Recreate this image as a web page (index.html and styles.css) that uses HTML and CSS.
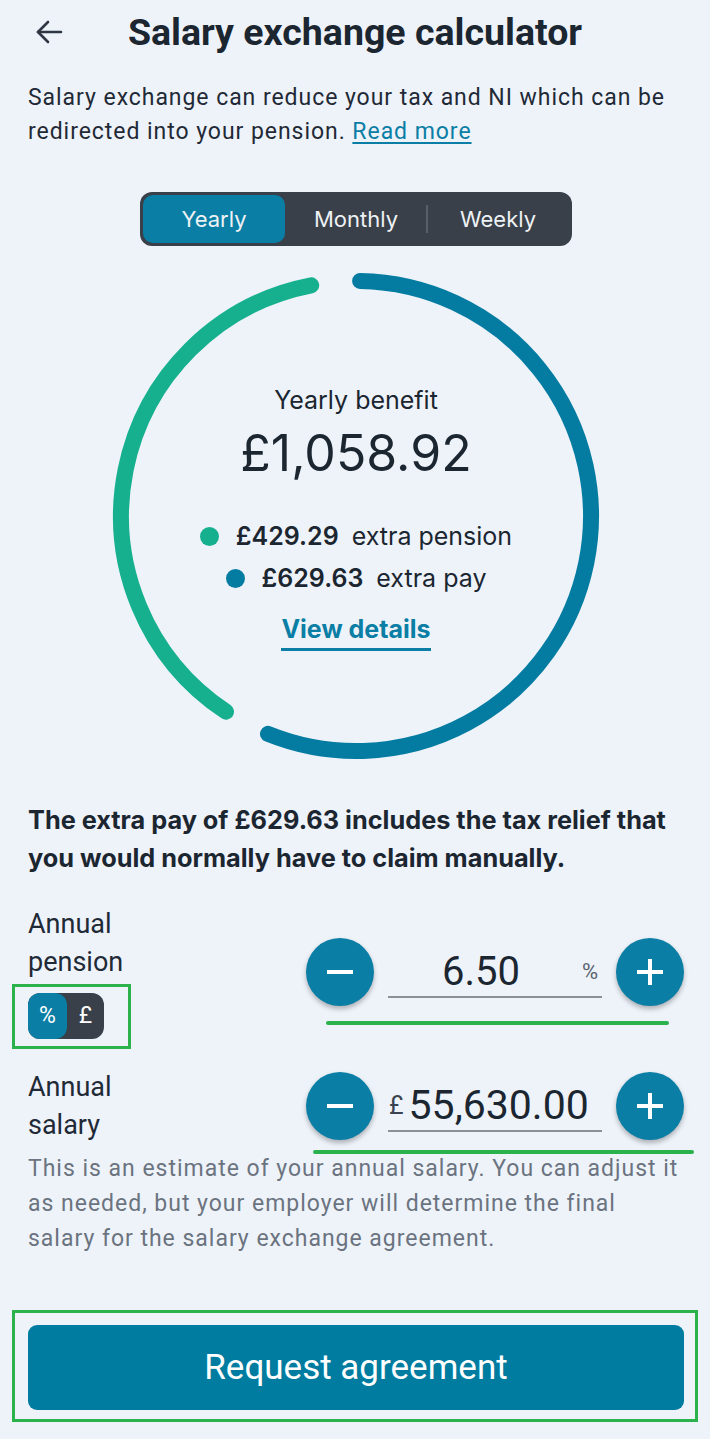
FILE: index.html
```html
<!DOCTYPE html>
<html lang="en">
<head>
  <meta charset="UTF-8" />
  <meta name="viewport" content="width=device-width, initial-scale=1.0"/>
  <title>Salary exchange calculator</title>
  <link rel="stylesheet" href="styles.css">
</head>
<body>

  <header class="topbar">
    <button class="back" aria-label="Back">
      <svg width="30" height="26" viewBox="0 0 30 26" fill="none" stroke="#2f3742" stroke-width="2.6" stroke-linecap="round" stroke-linejoin="round">
        <path d="M27 13H4"/>
        <path d="M14 3L4 13l10 10"/>
      </svg>
    </button>
    <h1>Salary exchange calculator</h1>
  </header>

  <main class="page">
    <p class="intro">Salary exchange can reduce your tax and NI which can be redirected into your pension. <a href="#">Read more</a></p>

    <!-- Period switch -->
    <div class="period-tabs">
      <button class="tab active">Yearly</button>
      <button class="tab">Monthly</button>
      <span class="tab-divider"></span>
      <button class="tab">Weekly</button>
    </div>

    <!-- Benefit ring -->
    <div class="ring">
      <svg class="ring-chart" width="500" height="500" viewBox="0 0 500 500" fill="none" stroke-width="16" stroke-linecap="round">
        <path d="M254.1 15.04 A235 235 0 1 1 162.0 467.9" stroke="#047ca2"/>
        <path d="M120.0 445.7 A235 235 0 0 1 205.2 19.3" stroke="#16b08f"/>
      </svg>
      <div class="ring-center">
        <div class="benefit-label">Yearly benefit</div>
        <div class="benefit-amount">£1,058.92</div>
        <div class="legend">
          <div class="legend-row"><span class="dot green"></span><b>£429.29</b>extra pension</div>
          <div class="legend-row"><span class="dot blue"></span><b>£629.63</b>extra pay</div>
        </div>
        <a class="view-details" href="#">View details</a>
      </div>
    </div>

    <p class="note">The extra pay of £629.63 includes the tax relief that you would normally have to claim manually.</p>

    <!-- Pension -->
    <div class="field-row">
      <div class="field-label">
        <div>Annual</div>
        <div>pension</div>
        <div class="unit-toggle">
          <span class="unit active">%</span>
          <span class="unit">£</span>
          <span class="mark mark-toggle"></span>
        </div>
      </div>
      <div class="stepper">
        <button class="step" aria-label="Decrease">
          <svg width="30" height="30" viewBox="0 0 30 30" stroke="#fff" stroke-width="4"><path d="M2 15h26"/></svg>
        </button>
        <div class="amount-input">
          <span class="value">6.50</span>
          <span class="suffix">%</span>
        </div>
        <button class="step" aria-label="Increase">
          <svg width="30" height="30" viewBox="0 0 30 30" stroke="#fff" stroke-width="4"><path d="M2 15h26M15 2v26"/></svg>
        </button>
        <span class="mark mark-line pension-line"></span>
      </div>
    </div>

    <!-- Salary -->
    <div class="field-row salary-row">
      <div class="field-label">
        <div>Annual</div>
        <div>salary</div>
      </div>
      <div class="stepper">
        <button class="step" aria-label="Decrease">
          <svg width="30" height="30" viewBox="0 0 30 30" stroke="#fff" stroke-width="4"><path d="M2 15h26"/></svg>
        </button>
        <div class="amount-input salary">
          <span class="prefix">£</span>
          <span class="value">55,630.00</span>
        </div>
        <button class="step" aria-label="Increase">
          <svg width="30" height="30" viewBox="0 0 30 30" stroke="#fff" stroke-width="4"><path d="M2 15h26M15 2v26"/></svg>
        </button>
        <span class="mark mark-line salary-line"></span>
      </div>
    </div>

    <p class="helper">This is an estimate of your annual salary. You can adjust it as needed, but your employer will determine the final salary for the salary exchange agreement.</p>

    <div class="cta-wrap">
      <button class="cta">Request agreement</button>
      <span class="mark mark-cta"></span>
    </div>
  </main>

</body>
</html>
```

FILE: styles.css
```css
body {
  margin: 0;
  background: #eef3fa;
  font-family: Roboto, "Liberation Sans", sans-serif;
  color: #1b2631;
}

button {
  font-family: inherit;
  border: none;
  background: none;
  padding: 0;
  cursor: pointer;
}

.topbar {
  display: grid;
  grid-template-columns: 90px 1fr 90px;
  align-items: center;
  padding-top: 12px;
  height: 40px;
}

.back {
  display: flex;
  padding-left: 34px;
}

.topbar h1 {
  margin: 0;
  font-size: 37.5px;
  line-height: 40px;
  font-weight: 700;
  text-align: center;
  white-space: nowrap;
  color: #1b2631;
}

.page {
  padding: 0 26px 28px 28px;
}

.intro {
  margin: 29px 0 0;
  font-size: 23px;
  line-height: 34px;
  letter-spacing: 0.95px;
  color: #1f2a36;
}

.intro a {
  color: #0a7ea4;
  text-underline-offset: 3px;
}

/* Period switch */
.period-tabs {
  display: flex;
  align-items: center;
  width: 432px;
  height: 54px;
  box-sizing: border-box;
  margin: 43px auto 0;
  padding: 3px;
  background: #394049;
  border-radius: 12px;
}

.tab {
  flex: 1;
  height: 48px;
  border-radius: 10px;
  font-family: Inter, "Noto Sans", sans-serif;
  font-size: 22px;
  color: #eef2f5;
}

.tab.active {
  background: #0a7ea4;
}

.tab-divider {
  width: 2px;
  height: 28px;
  margin: 0 -1px;
  background: #56606b;
}

/* Ring */
.ring {
  display: grid;
  width: 500px;
  height: 500px;
  margin: 20px auto 0;
}

.ring > * {
  grid-area: 1 / 1;
}

.ring-center {
  display: flex;
  flex-direction: column;
  align-items: center;
  padding-top: 119px;
  font-family: Inter, "Noto Sans", sans-serif;
  color: #1b2631;
}

.benefit-label {
  font-size: 25px;
  line-height: 30px;
}

.benefit-amount {
  margin-top: 8px;
  font-size: 50px;
  line-height: 60px;
}

.legend {
  display: flex;
  flex-direction: column;
  align-items: center;
  gap: 8px;
  margin-top: 36px;
}

.legend-row {
  display: flex;
  align-items: center;
  font-size: 25px;
  line-height: 34px;
}

.legend-row b {
  font-weight: 600;
  margin-right: 13px;
}

.dot {
  width: 19px;
  height: 19px;
  border-radius: 50%;
  margin-right: 17px;
}

.dot.green { background: #16b08f; }
.dot.blue { background: #047ca2; }

.view-details {
  margin-top: 19px;
  padding-bottom: 4px;
  font-size: 25px;
  line-height: 30px;
  font-weight: 700;
  color: #0a7ea4;
  text-decoration: none;
  border-bottom: 3px solid #0a7ea4;
}

.note {
  margin: 35px 0 0;
  font-family: Inter, "Noto Sans", sans-serif;
  font-size: 25.3px;
  line-height: 38px;
  font-weight: 700;
}

/* Fields */
.field-row {
  display: flex;
  align-items: center;
  margin-top: 28px;
}

.salary-row {
  margin-top: 29px;
}

.field-label {
  flex: 1;
  font-size: 27px;
  line-height: 38px;
  color: #1f2a36;
}

.unit-toggle {
  position: relative;
  display: inline-flex;
  margin-top: 12px;
  height: 46px;
  border-radius: 12px;
  background: #394049;
  vertical-align: top;
}

.unit {
  display: flex;
  align-items: center;
  justify-content: center;
  width: 37px;
  font-size: 23px;
  color: #fff;
}

.unit.active {
  width: 39px;
  background: #0a7ea4;
  border-radius: 12px;
}

.stepper {
  position: relative;
  display: flex;
  align-items: center;
  gap: 14px;
}

.step {
  display: flex;
  align-items: center;
  justify-content: center;
  width: 68px;
  height: 68px;
  border-radius: 50%;
  background: #0a7ea4;
  box-shadow: 0 3px 5px rgba(0, 0, 0, 0.28);
}

.amount-input {
  display: flex;
  align-items: center;
  width: 214px;
  height: 52px;
  box-sizing: border-box;
  border-bottom: 2px solid #8b9096;
  color: #1b2631;
}

.amount-input .value {
  flex: 1;
  text-align: center;
  font-size: 40px;
  padding-right: 8px;
}

.suffix {
  padding-right: 4px;
  font-size: 22px;
  color: #5b6470;
}

.amount-input.salary .value {
  text-align: left;
  padding: 0 0 0 5px;
  font-size: 41px;
}

.prefix {
  padding-left: 1px;
  font-size: 25px;
  color: #3a4450;
}

.helper {
  margin: 7px 0 0;
  font-size: 23px;
  line-height: 35px;
  letter-spacing: 0.98px;
  color: #6b7380;
}

.cta-wrap {
  position: relative;
  margin-top: 69px;
}

.cta {
  display: block;
  width: 100%;
  height: 85px;
  border-radius: 9px;
  background: #007ca0;
  color: #fff;
  font-size: 35px;
}

/* green review marks */
.mark {
  position: absolute;
  box-sizing: border-box;
  pointer-events: none;
}

.mark-toggle {
  left: -16px;
  top: -9px;
  width: 119px;
  height: 65px;
  border: 3px solid #2bb24c;
}

.mark-line {
  height: 4px;
  background: #2bb24c;
  border-radius: 2px;
}

.pension-line {
  left: 20px;
  top: 83px;
  width: 343px;
}

.salary-line {
  left: 7px;
  top: 78px;
  width: 381px;
}

.mark-cta {
  left: -16px;
  top: -15px;
  right: -14px;
  bottom: -12px;
  border: 3px solid #2bb24c;
}
```
